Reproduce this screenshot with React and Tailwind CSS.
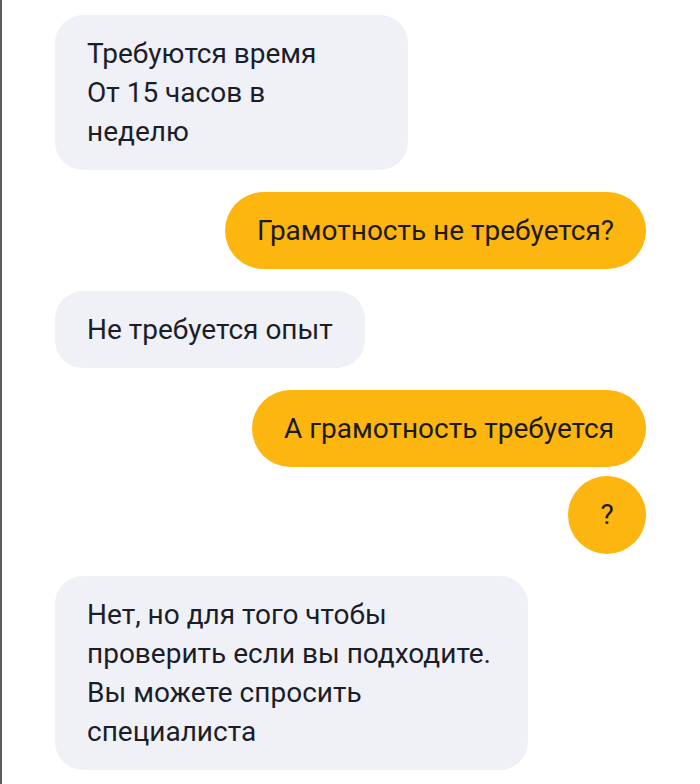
import React from "react";

const font = { fontFamily: "Roboto, 'Noto Sans', sans-serif" };

function In({ children, w }) {
  return (
    <div className={`rounded-[28px] bg-[#f0f1f6] px-8 py-[19px] text-[28px] leading-[39px] text-[#1b1e29] ${w}`}>
      {children}
    </div>
  );
}

function Out({ children, extra = "" }) {
  return (
    <div className={`self-end rounded-full bg-[#fdb50f] px-8 py-[19px] text-[28px] leading-[39px] text-[#1a1a1a] ${extra}`}>
      {children}
    </div>
  );
}

export default function App() {
  return (
    <div style={font} className="h-[784px] w-[700px] overflow-hidden border-l-2 border-[#5c5c5c] bg-white">
      <div className="flex flex-col items-start pl-[53px] pr-[54px] pt-[15px]">
        <In w="w-[353px]">
          Требуются время
          <br />
          От 15 часов в
          <br />
          неделю
        </In>
        <div className="mt-[22px] self-end">
          <Out>Грамотность не требуется?</Out>
        </div>
        <div className="mt-[22px]">
          <In w="">Не требуется опыт</In>
        </div>
        <div className="mt-[22px] self-end">
          <Out>А грамотность требуется</Out>
        </div>
        <div className="mt-[9px] self-end">
          <div className="flex h-[78px] w-[78px] items-center justify-center rounded-full bg-[#fdb50f] text-[28px] text-[#1a1a1a]">
            ?
          </div>
        </div>
        <div className="mt-[22px]">
          <In w="w-[473px]">
            Нет, но для того чтобы
            <br />
            проверить если вы подходите.
            <br />
            Вы можете спросить
            <br />
            специалиста
          </In>
        </div>
      </div>
    </div>
  );
}
